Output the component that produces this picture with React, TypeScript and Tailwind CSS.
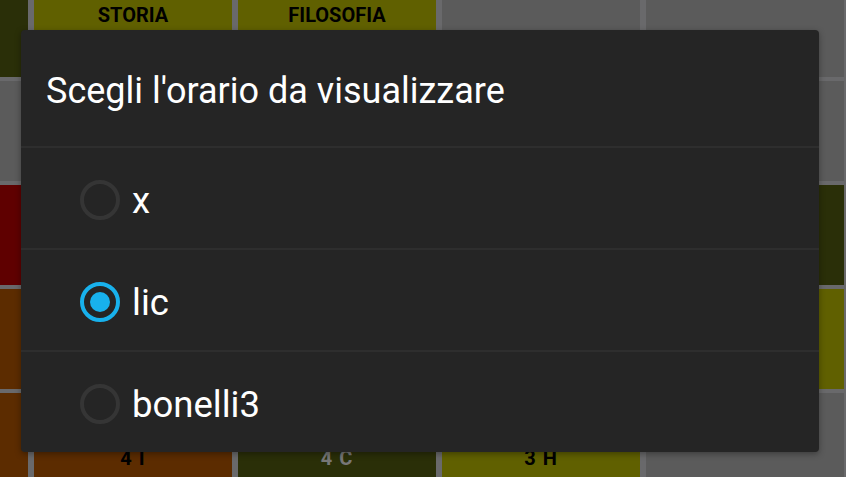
import React, { useState } from 'react';

type Cell = { bg: string; text?: string; sub?: string; ink?: string };

const GRAY = 'bg-[#5b5b5b]';
const OLIVE = 'bg-[#606000]';
const DARK = 'bg-[#2a2f08]';
const RED = 'bg-[#5f0000]';
const ORANGE = 'bg-[#5c2c00]';

// background timetable, already dimmed by the dialog scrim
const rows: Cell[][] = [
  [{ bg: DARK }, { bg: OLIVE, text: 'STORIA' }, { bg: OLIVE, text: 'FILOSOFIA' }, { bg: GRAY }, { bg: GRAY }],
  [{ bg: GRAY }, { bg: GRAY }, { bg: GRAY }, { bg: GRAY }, { bg: GRAY }],
  [{ bg: RED }, { bg: GRAY }, { bg: GRAY }, { bg: GRAY }, { bg: DARK }],
  [{ bg: ORANGE }, { bg: GRAY }, { bg: GRAY }, { bg: GRAY }, { bg: OLIVE }],
  [
    { bg: ORANGE },
    { bg: ORANGE, sub: '4 I' },
    { bg: DARK, sub: '4 C', ink: 'text-[#777777]' },
    { bg: OLIVE, sub: '3 H' },
    { bg: GRAY },
  ],
];

const options = ['x', 'lic', 'bonelli3'];

const Radio: React.FC<{ checked: boolean }> = ({ checked }) => (
  <span
    className={`flex items-center justify-center w-10 h-10 rounded-full border-[4px] ${
      checked ? 'border-[#18b1ec]' : 'border-[#353535]'
    }`}
  >
    {checked && <span className="w-5 h-5 rounded-full bg-[#18b1ec]"></span>}
  </span>
);

const App: React.FC = () => {
  const [selected, setSelected] = useState('lic');

  return (
    <div className="relative w-[846px] h-[477px] overflow-hidden bg-[#69696b] font-['Roboto',sans-serif]">
      <div className="grid grid-cols-[repeat(5,198px)] auto-rows-[100px] gap-x-[6px] gap-y-[4px] -ml-[170px] -mt-[23px]">
        {rows.map((row, r) =>
          row.map((cell, c) => (
            <div
              key={`${r}-${c}`}
              className={`${cell.bg} flex flex-col items-center pt-[25px] text-[20px] leading-[27px] font-bold ${cell.ink ?? 'text-black'}`}
            >
              <span className="h-[27px]">{cell.text ?? ''}</span>
              <span className="h-[27px] tracking-[1px]">{cell.sub ?? ''}</span>
            </div>
          ))
        )}
      </div>

      <div className="absolute left-[21px] top-[30px] w-[798px] h-[422px] rounded-[4px] bg-[#252525] shadow-[0_2px_6px_rgba(0,0,0,0.35)] flex flex-col">
        <div className="h-[116px] flex items-center pl-[25px] pt-[6px] text-[36px] text-white">
          Scegli l'orario da visualizzare
        </div>
        {options.map((opt) => (
          <div key={opt} className="border-t-2 border-[#2e2e2e] h-[102px] flex items-center">
            <button
              onClick={() => setSelected(opt)}
              className="flex items-center gap-[12px] pl-[59px] pt-[3px] w-full h-full text-left"
            >
              <Radio checked={selected === opt} />
              <span className="text-[36.5px] text-white pt-[3px]">{opt}</span>
            </button>
          </div>
        ))}
      </div>
    </div>
  );
};

export default App;
